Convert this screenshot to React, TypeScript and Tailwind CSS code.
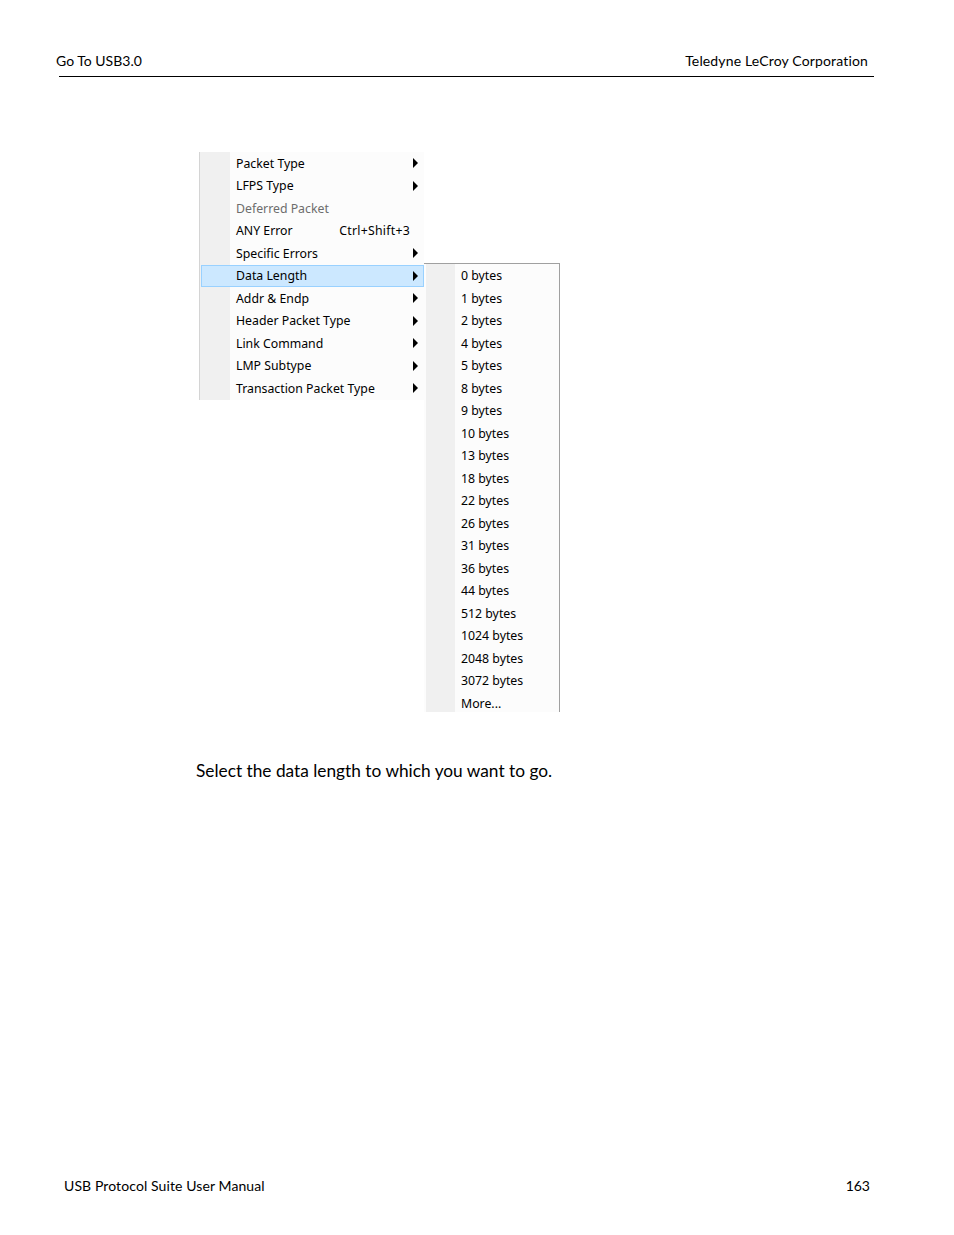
import React from "react";

type Item = { label: string; arrow?: boolean; disabled?: boolean; shortcut?: string; active?: boolean };

const mainItems: Item[] = [
  { label: "Packet Type", arrow: true },
  { label: "LFPS Type", arrow: true },
  { label: "Deferred Packet", disabled: true },
  { label: "ANY Error", shortcut: "Ctrl+Shift+3" },
  { label: "Specific Errors", arrow: true },
  { label: "Data Length", arrow: true, active: true },
  { label: "Addr & Endp", arrow: true },
  { label: "Header Packet Type", arrow: true },
  { label: "Link Command", arrow: true },
  { label: "LMP Subtype", arrow: true },
  { label: "Transaction Packet Type", arrow: true },
];

const subItems = [
  "0 bytes", "1 bytes", "2 bytes", "4 bytes", "5 bytes", "8 bytes", "9 bytes", "10 bytes", "13 bytes",
  "18 bytes", "22 bytes", "26 bytes", "31 bytes", "36 bytes", "44 bytes", "512 bytes", "1024 bytes",
  "2048 bytes", "3072 bytes", "More...",
];

function Arrow() {
  return (
    <svg width="5" height="10" viewBox="0 0 5 10" className="shrink-0 -mt-px">
      <polygon points="0,0 5,5 0,10" fill="#000" />
    </svg>
  );
}

export default function App() {
  const doc = { fontFamily: "Lato, 'Liberation Sans', sans-serif" };
  const ui = { fontFamily: "'Noto Sans', 'Open Sans', sans-serif" };
  return (
    <div className="w-[954px] h-[1235px] bg-white flex flex-col text-black" style={doc}>
      <header className="mt-[52px] ml-[59px] w-[815px] border-b border-black pb-[6px] flex justify-between text-[14px] leading-[18px]">
        <span className="-ml-[3px]">Go To USB3.0</span>
        <span className="pr-[6px] tracking-[0.15px]">Teledyne LeCroy Corporation</span>
      </header>

      <div className="mt-[75px] ml-[199px] flex items-start text-[12.3px]" style={ui}>
        <div className="w-[225px] border-l border-[#d4d4d4] bg-[linear-gradient(to_right,#f0f0f0_30px,#fcfcfc_30px)]">
          {mainItems.map((it) =>
            it.active ? (
              <div
                key={it.label}
                className="h-[22.5px] ml-px bg-[#cce8ff] border border-[#99d1ff] flex items-center pt-px pl-[34px] pr-[5px]"
              >
                <span className="flex-1">{it.label}</span>
                <Arrow />
              </div>
            ) : (
              <div key={it.label} className="h-[22.5px] flex items-center pt-px pl-[36px] pr-[6px]">
                <span className={"flex-1 " + (it.disabled ? "text-[#6d6d6d]" : "")}>{it.label}</span>
                {it.shortcut && <span className="pr-[8px] tracking-[0.25px]">{it.shortcut}</span>}
                {it.arrow && <Arrow />}
              </div>
            )
          )}
        </div>

        <div className="mt-[111px] w-[136px] h-[449px] overflow-hidden border-t border-r border-[#a0a0a0] bg-[linear-gradient(to_right,#fcfcfc_2px,#f0f0f0_2px,#f0f0f0_31px,#fcfcfc_31px)] pt-[0.5px]">
          {subItems.map((s) => (
            <div key={s} className="h-[22.5px] flex items-center pt-px pl-[37px]">
              {s}
            </div>
          ))}
        </div>
      </div>

      <p className="mt-[48px] ml-[196px] text-[17.3px] leading-[21px]">Select the data length to which you want to go.</p>

      <footer className="mt-auto mb-[40px] ml-[64px] w-[806px] flex justify-between text-[14px] leading-[18px]">
        <span className="tracking-[0.1px]">USB Protocol Suite User Manual</span>
        <span>163</span>
      </footer>
    </div>
  );
}
